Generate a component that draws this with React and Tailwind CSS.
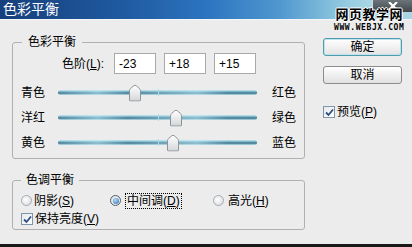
import React from 'react'

const Thumb = ({ left }) => (
    <svg
        className="absolute top-1/2 -translate-y-1/2"
        style={{ left }}
        width="12"
        height="17"
        viewBox="0 0 12 17"
    >
        <defs>
            <linearGradient id="thumbFill" x1="0" y1="0" x2="0" y2="1">
                <stop offset="0" stopColor="#ffffff" />
                <stop offset="1" stopColor="#d4d6d8" />
            </linearGradient>
        </defs>
        <path
            d="M1.5 16.5 Q0.5 16.5 0.5 15.5 V6.2 Q0.5 5 1.6 4 L4.8 1.2 Q6 0.3 7.2 1.2 L10.4 4 Q11.5 5 11.5 6.2 V15.5 Q11.5 16.5 10.5 16.5 Z"
            fill="url(#thumbFill)"
            stroke="#8e9396"
            strokeWidth="1"
        />
    </svg>
)

const Slider = ({ left, right, pos }) => (
    <div className="flex h-[25px] items-center pl-[8px]">
        <span className="w-[37px]">{left}</span>
        <div className="relative h-[5px] w-[199px] rounded-full bg-[linear-gradient(to_bottom,#c6ebf5,#5f9bb2_45%,#3b6b83_60%,#b4e2ef)]">
            <div className="absolute inset-0 rounded-full bg-[linear-gradient(to_right,transparent,rgba(200,240,250,0.5)_20%,transparent_35%,rgba(200,240,250,0.5)_70%,transparent_85%)]" />
            <div className="absolute left-[100px] top-[-1px] h-[7px] w-px bg-[#a9dbe9]" />
            <Thumb left={pos} />
        </div>
        <span className="ml-[15px]">{right}</span>
    </div>
)

const NumBox = ({ value }) => (
    <div className="flex h-[21px] w-[42px] items-center border border-[#a9a9a9] bg-white pl-[4px]">
        {value}
    </div>
)

const Radio = ({ checked }) => (
    <span
        className={
            checked
                ? "flex h-[11px] w-[11px] items-center justify-center rounded-full border border-[#55606c] bg-[#e4e8ec]"
                : "flex h-[11px] w-[11px] items-center justify-center rounded-full border border-[#a6acb2] bg-[radial-gradient(circle_at_40%_40%,#ffffff,#d3d6da)]"
        }
    >
        {checked && <span className="h-[6px] w-[6px] rounded-full bg-[radial-gradient(circle_at_40%_35%,#b6e0fb,#2466ad)]" />}
    </span>
)

const Check = () => (
    <span className="flex h-[12px] w-[12px] items-center justify-center border border-[#8095a8] bg-[linear-gradient(to_bottom_right,#e6e9ec,#ffffff)]">
        <svg width="9" height="9" viewBox="0 0 9 9">
            <path d="M1 4.5 L3.5 7 L8 1.5" fill="none" stroke="#2a4f80" strokeWidth="1.8" />
        </svg>
    </span>
)

const App = () => {
    return (
        <div className="relative flex h-[247px] w-[412px] flex-col overflow-hidden bg-[#ececec] font-['Liberation_Sans','Noto_Sans_CJK_SC',sans-serif] text-[12px] leading-[16px] text-black">
            {/* title bar */}
            <div className="flex h-[19px] items-start justify-between bg-[linear-gradient(to_right,#17407c_0%,#1f5aa0_30%,#2c74c0_50%,#4f98cf_68%,#95cbe0_84%,#a9d5e4_90%)]">
                <span className="pl-[3px] pt-[1px] text-[14px] leading-[17px] text-white">色彩平衡</span>
                <div className="flex h-[12px] w-[40px] items-center justify-center rounded-bl-[3px] border-l border-[#c8dbe4] bg-[linear-gradient(to_bottom,#6b7479,#40484d)]">
                    <svg width="10" height="8" viewBox="0 0 10 8">
                        <path d="M1 0 L9 8 M9 0 L1 8" stroke="#ffffff" strokeWidth="2.2" />
                    </svg>
                </div>
            </div>
            <div className="h-px bg-[#f4f6f8]" />

            {/* watermark */}
            <div className="absolute left-[334px] top-[7px] flex flex-col items-center">
                <span className="text-[13px] font-bold leading-[15px] tracking-[0.5px] text-black [text-shadow:1px_0_#fff,-1px_0_#fff,0_1px_#fff,0_-1px_#fff]">网页教学网</span>
                <span className="mt-[2px] font-['DejaVu_Sans_Mono',monospace] text-[8px] font-bold leading-[8px] tracking-[0.6px] text-black">WWW.WEBJX.COM</span>
            </div>

            {/* body */}
            <div className="flex flex-1 pl-[12px] pt-[14px]">
                <div className="flex w-[293px] flex-col">
                    <fieldset className="rounded-[3px] border border-[#b0b0b0] pb-[3px]">
                        <legend className="ml-[9px] px-[6px] leading-[16px]">色彩平衡</legend>
                        <div className="mt-[3px] flex items-center pl-[49px]">
                            <span className="w-[52px]">
                                色阶(<u>L</u>):
                            </span>
                            <div className="flex gap-[8px]">
                                <NumBox value="-23" />
                                <NumBox value="+18" />
                                <NumBox value="+15" />
                            </div>
                        </div>
                        <div className="mt-[5px]">
                            <div className="h-[1px]" />
                            <Slider left="青色" right="红色" pos={71} />
                            <Slider left="洋红" right="绿色" pos={112} />
                            <Slider left="黄色" right="蓝色" pos={109} />
                        </div>
                    </fieldset>

                    <fieldset className="mt-[13px] rounded-[3px] border border-[#b0b0b0]">
                        <legend className="ml-[8px] px-[5px] leading-[16px]">色调平衡</legend>
                        <div className="mt-[4px] flex h-[17px] items-center pl-[8px]">
                            <div className="flex w-[89px] items-center gap-[2px]">
                                <Radio />
                                <span>
                                    阴影(<u>S</u>)
                                </span>
                            </div>
                            <div className="flex w-[103px] items-center gap-[4px]">
                                <Radio checked />
                                <span className="border border-dotted border-black px-px leading-[14px]">
                                    中间调(<u>D</u>)
                                </span>
                            </div>
                            <div className="flex items-center gap-[4px]">
                                <Radio />
                                <span>
                                    高光(<u>H</u>)
                                </span>
                            </div>
                        </div>
                        <div className="flex h-[20px] items-center gap-[2px] pl-[8px]">
                            <Check />
                            <span>
                                保持亮度(<u>V</u>)
                            </span>
                        </div>
                    </fieldset>
                </div>

                <div className="ml-[18px] flex w-[79px] flex-col pt-[4px]">
                    <button className="flex h-[18px] items-center justify-center rounded-[3px] border border-[#4f9cae] bg-[linear-gradient(to_bottom,#ffffff,#e3e3e3)] shadow-[inset_0_0_0_1px_#bfe3ec]">
                        确定
                    </button>
                    <button className="mt-[10px] flex h-[18px] items-center justify-center rounded-[3px] border border-[#8c8c8c] bg-[linear-gradient(to_bottom,#ffffff,#e0e0e0)]">
                        取消
                    </button>
                    <div className="mt-[20px] flex items-center gap-[2px]">
                        <Check />
                        <span>
                            预览(<u>P</u>)
                        </span>
                    </div>
                </div>
            </div>

            <div className="h-[3px] bg-[#1a1a1a]" />
        </div>
    )
}

export default App
